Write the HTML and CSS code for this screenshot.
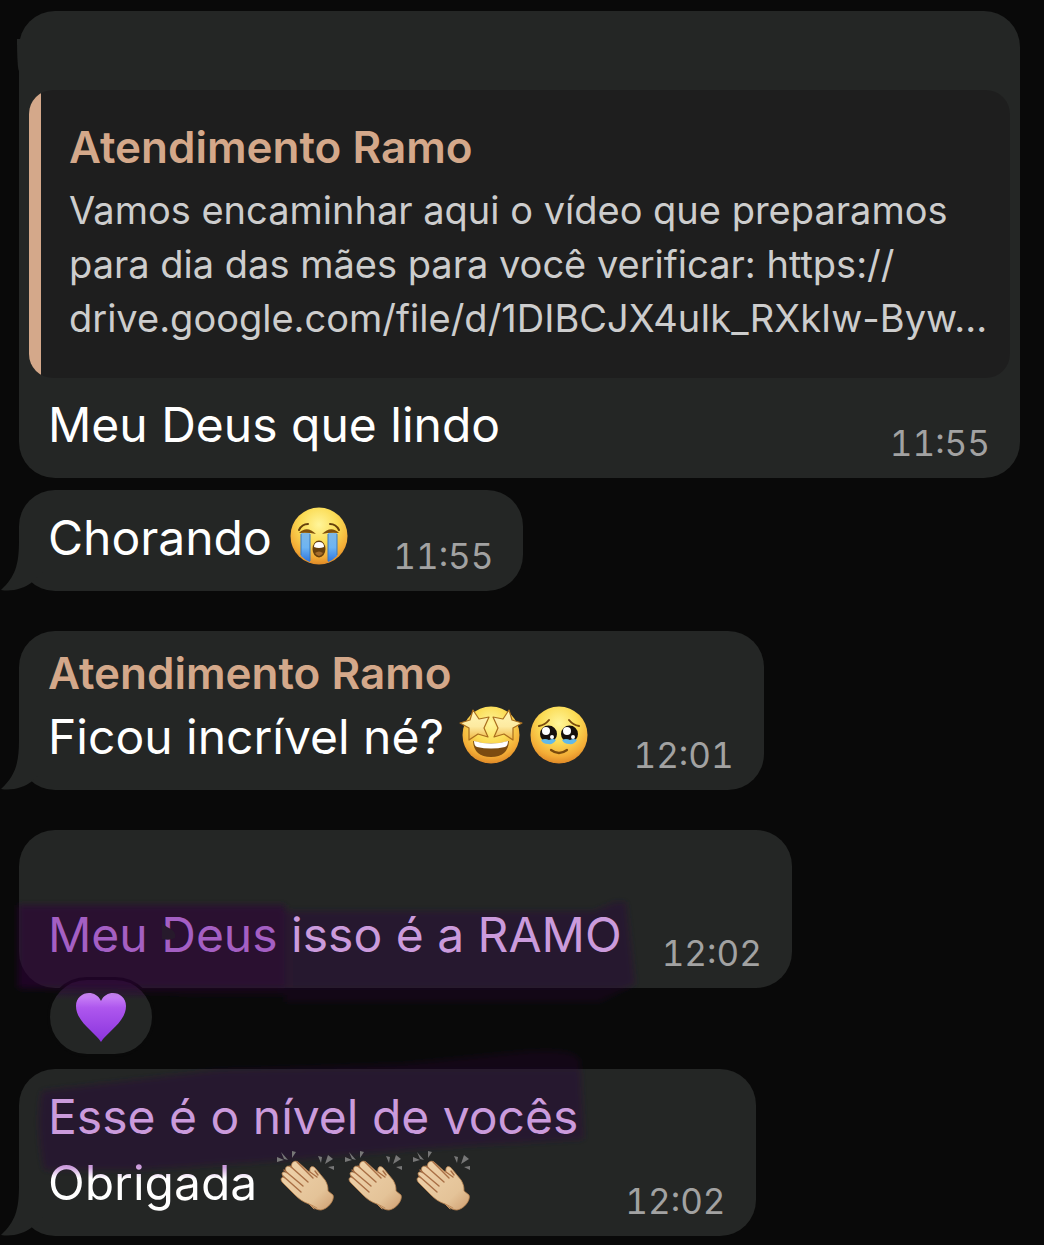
FILE: index.html
```html
<!DOCTYPE html>
<html lang="pt-BR">
<head>
<meta charset="utf-8">
<meta name="viewport" content="width=device-width, initial-scale=1">
<title>Conversa</title>
<link rel="stylesheet" href="styles.css">
</head>
<body>
<svg class="defs" aria-hidden="true">
  <defs>
    <radialGradient id="face" cx="50%" cy="30%" r="72%">
      <stop offset="0" stop-color="#fff59a"/>
      <stop offset=".45" stop-color="#fbdc55"/>
      <stop offset=".8" stop-color="#f3ac36"/>
      <stop offset="1" stop-color="#dc8425"/>
    </radialGradient>
    <linearGradient id="tear" x1="0" y1="0" x2="0" y2="1">
      <stop offset="0" stop-color="#7fb8e6"/>
      <stop offset=".5" stop-color="#6db4f2"/>
      <stop offset="1" stop-color="#2d74dc"/>
    </linearGradient>
    <linearGradient id="star" x1="0" y1="0" x2="0" y2="1">
      <stop offset="0" stop-color="#fff6b8"/>
      <stop offset=".55" stop-color="#fdeaa0"/>
      <stop offset="1" stop-color="#efb640"/>
    </linearGradient>
    <linearGradient id="heart" x1="0" y1="0" x2="0" y2="1">
      <stop offset="0" stop-color="#cf8bf8"/>
      <stop offset=".3" stop-color="#ae57ee"/>
      <stop offset="1" stop-color="#8a34dd"/>
    </linearGradient>
    <linearGradient id="skin" x1="0" y1="0" x2="1" y2="1">
      <stop offset="0" stop-color="#efd3ac"/>
      <stop offset=".7" stop-color="#e4c398"/>
      <stop offset="1" stop-color="#cf9e70"/>
    </linearGradient>
    <linearGradient id="marker-deep" gradientUnits="userSpaceOnUse" x1="0" y1="0" x2="0" y2="120">
      <stop offset=".81" stop-color="#2c0a3a" stop-opacity=".58"/>
      <stop offset=".82" stop-color="#2c0238" stop-opacity=".26"/>
    </linearGradient>
    <linearGradient id="marker-light" gradientUnits="userSpaceOnUse" x1="0" y1="0" x2="0" y2="120">
      <stop offset=".81" stop-color="#2e0240" stop-opacity=".36"/>
      <stop offset=".82" stop-color="#2e0240" stop-opacity=".24"/>
    </linearGradient>
    <linearGradient id="marker-low" gradientUnits="userSpaceOnUse" x1="0" y1="0" x2="0" y2="140">
      <stop offset=".17" stop-color="#2e0240" stop-opacity=".24"/>
      <stop offset=".18" stop-color="#2e0240" stop-opacity=".36"/>
    </linearGradient>
    <filter id="soft" x="-10%" y="-20%" width="120%" height="140%">
      <feGaussianBlur stdDeviation="3"/>
    </filter>
    <symbol id="tail" viewBox="0 0 44 50">
      <path d="M19 0C19 24 15 36 1 49C13 51 24 47 31 42L44 30V0Z"/>
    </symbol>
    <symbol id="clap" viewBox="0 0 60 62">
      <g fill="#777">
        <path d="M2 8l7 3-7 2zM6 3l7 8-4-1zM17 2l4 1-4 6zM43 7l4 1-1 6zM53 6l5 4-8 5zM53 18l6-1v4z"/>
      </g>
      <path fill="url(#skin)" stroke="#b9834f" stroke-width=".8" d="M35 23C34 17 38 16 41 20L50 31C53 36 53 39 53 42L58 46C60 51 53 60 46 61C40 61 37 57 34 55C28 53 24 50 20 46L8 34C4 30 7 27 10 29C5 25 7 21 12 24C8 18 13 15 17 19C15 13 20 11 23 13L33 22Z"/>
      <path fill="none" stroke="#a96f45" stroke-width="1.4" stroke-linecap="round" d="M8 27L26 43M9 21L28 37M15 17L33 33M22 13L38 29M35 23L42 28M40 22L43 26"/>
      <path fill="none" stroke="#c18d5d" stroke-linecap="round" d="M34 55Q39 57 42 59M35 56L39 60"/>
    </symbol>
  </defs>
</svg>

<main class="chat">
  <article class="bubble bubble--wide bubble--headless bubble--nub">
    <blockquote class="quote">
      <h2 class="sender">Atendimento Ramo</h2>
      <p class="quote__text">Vamos encaminhar aqui o vídeo que preparamos<br>para dia das mães para você verificar: https://<br>drive.google.com/file/d/1DIBCJX4uIk_RXkIw-Byw...</p>
    </blockquote>
    <div class="row">
      <p class="text">Meu Deus que lindo</p>
      <time class="time">11:55</time>
    </div>
  </article>

  <article class="bubble bubble--next">
    <svg class="tail" aria-hidden="true"><use href="#tail"/></svg>
    <div class="row">
      <p class="text">Chorando
        <svg class="emoji" viewBox="0 0 60 60" role="img" aria-label="chorando alto">
          <circle cx="30" cy="30" r="28.500" fill="url(#face)"/>
          <path fill="url(#tear)" d="M12 27h9v29q-5-2-9-6zM39 27h9v23q-4 4-9 6z"/>
          <path fill="none" stroke="#3978bd" d="M12 28v21M21 28v27M39 28v27M48 28v21"/>
          <path fill="none" stroke="#65400b" stroke-width="2" stroke-linecap="round" d="M10 24q3-6 9-6M41 18q6 0 9 6"/>
          <path fill="#80500c" d="M10 27q8-8 17 1-8-2-17-1zM33 28q9-9 17-1-9-1-17 1z"/>
          <ellipse cx="30" cy="43" rx="6.500" ry="8.500" fill="#68400d"/>
          <path fill="#fff" d="M25 41q0-5 5-5t5 5q-5 2-10 0z"/>
          <path fill="#a66d2b" d="M26 47q4-3 8 0-4 6-8 0z"/>
        </svg></p>
      <time class="time">11:55</time>
    </div>
  </article>

  <article class="bubble">
    <svg class="tail" aria-hidden="true"><use href="#tail"/></svg>
    <h2 class="sender">Atendimento Ramo</h2>
    <div class="row">
      <p class="text">Ficou incrível né?
        <svg class="emoji" viewBox="0 0 60 60" role="img" aria-label="olhos de estrela">
          <circle cx="30" cy="30" r="28.500" fill="url(#face)"/>
          <path fill="#7b4b10" d="M12 36q18 5 36 0-1 16-18 16T12 36z"/>
          <path fill="#fff" d="M13 36q17 5 34 0 0 5-3 6-14 3-28 0-3-1-3-6z"/>
          <g fill="url(#star)" stroke="#a96d1d" stroke-width="1.200" stroke-linejoin="round">
            <path d="M12 5l6 9 10-2-5 11 4 9-10-3-9 6V23L-1 18l10-3z"/>
            <path d="M48 5l-6 9-10-2 5 11-4 9 10-3 9 6V23l9-5-10-3z"/>
          </g>
        </svg><svg class="emoji" viewBox="0 0 60 60" role="img" aria-label="segurando as lágrimas">
          <circle cx="30" cy="30" r="28.500" fill="url(#face)"/>
          <path fill="none" stroke="#7a4b0d" stroke-width="2" stroke-linecap="round" d="M10 21q6-1 10-6M40 15q4 5 10 6"/>
          <circle cx="19.500" cy="29" r="8.500" fill="#16100d"/>
          <circle cx="40.500" cy="29" r="8.500" fill="#16100d"/>
          <path fill="#61b9e8" d="M12 35q4-2 8 0 4-2 7 0-3 5-8 4-5 0-7-4zM33 35q4-2 8 0 4-2 7 0-3 5-8 4-5 0-7-4z"/>
          <g fill="#fff"><circle cx="17" cy="26" r="4"/><circle cx="38" cy="26" r="4"/><circle cx="23" cy="32" r="2"/><circle cx="44" cy="32" r="2"/></g>
          <path fill="none" stroke="#7a4b0d" stroke-width="2.200" stroke-linecap="round" d="M22 45q8 6 16 0"/>
        </svg></p>
      <time class="time">12:01</time>
    </div>
  </article>

  <article class="bubble bubble--headless">
    <svg class="marker marker--first" viewBox="0 0 660 120" aria-hidden="true">
      <g filter="url(#soft)">
        <path d="M18 15H285V105L200 105L18 99Z" fill="url(#marker-deep)"/>
        <path d="M285 21H594L615 12H626L635 94L600 112H285Z" fill="url(#marker-light)"/>
      </g>
    </svg>
    <div class="row">
      <p class="text"><mark class="ink ink--deep">Meu <span class="smudged">Deus<svg class="smudge" viewBox="0 0 24 28" aria-hidden="true"><path d="M0 4L5 8Q15 12 13 19Q8 22 0 20Z"/></svg></span></mark> <mark class="ink">isso é a RAMO</mark></p>
      <time class="time">12:02</time>
    </div>
  </article>
  <button class="reaction" type="button" aria-label="Reação: coração roxo">
    <svg class="reaction__heart" viewBox="0 0 52 50" aria-hidden="true">
      <path fill="url(#heart)" d="M26 50C20 40 1 30 1 14C1 0 20-4 26 9C32-4 51 0 51 14C51 30 32 40 26 50Z"/>
    </svg>
  </button>

  <article class="bubble bubble--after-reaction">
    <svg class="marker marker--second" viewBox="0 0 600 140" aria-hidden="true">
      <path filter="url(#soft)" d="M42 46L220 25L400 19L530 6Q577 3 580 16L584 94L430 103L290 115L140 125H44Q35 80 42 46Z" fill="url(#marker-low)"/>
    </svg>
    <svg class="tail" aria-hidden="true"><use href="#tail"/></svg>
    <div class="row row--spaced">
      <p class="text"><mark class="ink">Esse é o nível de vocês</mark><br><span class="fade">Obrigada</span>
        <svg class="emoji emoji--clap" role="img" aria-label="aplausos"><use href="#clap"/></svg><svg class="emoji emoji--clap" role="img" aria-label="aplausos"><use href="#clap"/></svg><svg class="emoji emoji--clap" role="img" aria-label="aplausos"><use href="#clap"/></svg></p>
      <time class="time">12:02</time>
    </div>
  </article>
</main>
</body>
</html>
```
FILE: styles.css
```css
:root {
  --page: #090909;
  --bubble: #242625;
  --quote: #1e1e1e;
  --accent: #d4a88a;
  --ink: #cb9bdc;
  --ink-deep: #a45fc3;
}

* {
  box-sizing: border-box;
}

body {
  margin: 0;
  background: var(--page);
  color: #fff;
  font-family: Inter, "Liberation Sans", sans-serif;
}

h2,
p,
blockquote {
  margin: 0;
}

.defs {
  position: absolute;
  width: 0;
  height: 0;
}

.chat {
  display: flex;
  flex-direction: column;
  align-items: flex-start;
  padding: 11px 24px 10px 19px;
}

.bubble {
  position: relative;
  margin-top: 40px;
  padding: 15px 30px 13px 29px;
  border-radius: 36px;
  background: var(--bubble);
}

.bubble--wide {
  align-self: stretch;
  margin-top: 0;
}

.bubble--next {
  margin-top: 12px;
}

.bubble--after-reaction {
  margin-top: 12px;
}

.bubble--headless {
  padding-top: 72px;
}

.bubble--wide.bubble--headless {
  padding-top: 79px;
}

.bubble--nub::before {
  content: "";
  position: absolute;
  top: 28px;
  left: -2px;
  width: 6px;
  height: 32px;
  border-bottom-left-radius: 2px 32px;
  background: var(--bubble);
}

.tail {
  position: absolute;
  left: -19px;
  bottom: 0;
  width: 44px;
  height: 50px;
  fill: var(--bubble);
}

.quote {
  margin: 0 -20px 14px -19px;
  padding: 30px 12px 33px 40px;
  border-radius: 24px;
  background: linear-gradient(to right, var(--accent) 12px, var(--quote) 12px);
}

.sender {
  margin-bottom: 4px;
  color: var(--accent);
  font-size: 44px;
  font-weight: 600;
  line-height: 54px;
}

.quote .sender {
  margin-bottom: 9px;
}

.quote__text {
  color: #cdcdcd;
  font-size: 38px;
  line-height: 54px;
}

.row {
  position: relative;
  z-index: 2;
  display: flex;
  align-items: flex-end;
  justify-content: space-between;
  gap: 40px;
}

.row--spaced {
  gap: 47px;
}

.text {
  margin-bottom: 7px;
  font-size: 48px;
  line-height: 66px;
}

.time {
  color: #a2a2a2;
  font-size: 35px;
  font-variant-numeric: tabular-nums;
  line-height: 44px;
}

.emoji {
  width: 60px;
  height: 60px;
  margin: -16px 4px 0;
  overflow: visible;
  vertical-align: -11px;
}

.emoji--clap {
  height: 62px;
}

.ink {
  background: none;
  color: var(--ink);
}

.ink--deep {
  color: var(--ink-deep);
}

.fade {
  display: inline-block;
  background: linear-gradient(var(--ink) 17px, #fff 28px);
  background-clip: text;
  color: transparent;
}

.smudged {
  position: relative;
}

.smudge {
  position: absolute;
  top: 14px;
  left: 1px;
  width: 24px;
  height: 28px;
  fill: #271a2c;
}

.marker {
  position: absolute;
  left: -19px;
  z-index: 1;
  overflow: visible;
}

.marker--first {
  top: 60px;
  width: 660px;
  height: 120px;
}

.marker--second {
  top: -24px;
  width: 600px;
  height: 140px;
}

.reaction {
  position: relative;
  display: flex;
  align-items: center;
  justify-content: center;
  width: 108px;
  height: 80px;
  margin: -11px 0 0 28px;
  padding: 0;
  border: 3px solid var(--page);
  border-radius: 40px;
  background: linear-gradient(#281c2e 14px, var(--bubble) 20px);
}

.reaction__heart {
  width: 52px;
  height: 50px;
}
```
